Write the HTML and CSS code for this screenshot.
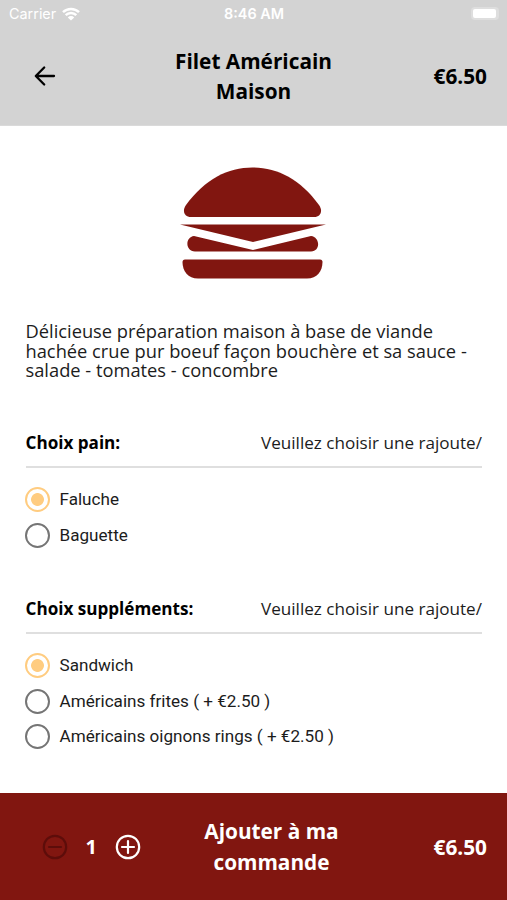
FILE: index.html
```html
<!DOCTYPE html>
<html lang="fr">
   <head>
      <title>Filet Américain Maison</title>
      <meta charset="utf-8">
      <link rel="stylesheet" href="styles.css">
   </head>

   <body>
      <div class="screen">
         <header class="header">
            <div class="status">
               <div class="carrier">
                  <span>Carrier</span>
                  <svg class="wifi" viewBox="0 0 18 14">
                     <path d="M1 5.2a11.5 11.5 0 0 1 16 0M3.7 8.1a7.6 7.6 0 0 1 10.6 0" fill="none" stroke="#fff" stroke-width="2.5"/>
                     <path d="M9 13.5L5.8 10.4a4.6 4.6 0 0 1 6.4 0z" fill="#fff"/>
                  </svg>
               </div>
               <span class="time">8:46 AM</span>
               <div class="battery"><div class="level"></div></div>
            </div>
            <div class="bar">
               <svg class="back" viewBox="0 0 22 22">
                  <path d="M20 11H2M10.2 2.5L1.8 11l8.4 8.5" fill="none" stroke="#000" stroke-width="2.3" stroke-linecap="round" stroke-linejoin="round"/>
               </svg>
               <h1 class="title">Filet Américain<br>Maison</h1>
               <span class="price">€6.50</span>
            </div>
         </header>

         <main class="content">
            <svg class="burger" viewBox="0 0 146 112" fill="#811610">
               <path d="M11 50C4 50 2 43.500 6 38C25 12 48 .5 72.500 .5S120 12 139 38C143 43.500 141 50 134 50z"/>
               <path d="M0 57.500H146L73 75z"/>
               <path d="M14 69L73 83L131 69C140 70 141 84 131 84.500H15C5 84 5 70 14 69z"/>
               <path d="M5 92.500H140Q142.500 92.500 142.500 95C142.500 104 137 111.500 127 111.500H18C8 111.500 2.500 104 2.500 95Q2.500 92.500 5 92.500z"/>
            </svg>
            <p class="description">Délicieuse préparation maison à base de viande<br>hachée crue pur boeuf façon bouchère et sa sauce -<br>salade - tomates - concombre</p>

            <section class="group">
               <div class="group_head">
                  <h2>Choix pain:</h2>
                  <span class="hint">Veuillez choisir une rajoute/</span>
               </div>
               <label class="option"><input type="radio" name="pain" checked><span>Faluche</span></label>
               <label class="option"><input type="radio" name="pain"><span>Baguette</span></label>
            </section>

            <section class="group">
               <div class="group_head">
                  <h2>Choix suppléments:</h2>
                  <span class="hint">Veuillez choisir une rajoute/</span>
               </div>
               <label class="option"><input type="radio" name="supplement" checked><span>Sandwich</span></label>
               <label class="option"><input type="radio" name="supplement"><span>Américains frites ( + €2.50 )</span></label>
               <label class="option"><input type="radio" name="supplement"><span>Américains oignons rings ( + €2.50 )</span></label>
            </section>
         </main>

         <footer class="footer">
            <div class="quantity">
               <svg class="minus" viewBox="0 0 26 26">
                  <circle cx="13" cy="13" r="11.200"/>
                  <path d="M7 13h12"/>
               </svg>
               <span class="count">1</span>
               <svg class="plus" viewBox="0 0 26 26">
                  <circle cx="13" cy="13" r="11.200"/>
                  <path d="M7 13h12M13 7v12"/>
               </svg>
            </div>
            <span class="add">Ajouter à ma<br>commande</span>
            <span class="price">€6.50</span>
         </footer>
      </div>
   </body>
</html>
```
FILE: styles.css
```css
* {box-sizing: border-box;}
body {margin: 0; background-color: #fff; color: #000; font-family: "Open Sans", "Noto Sans", sans-serif;}
.screen {display: flex; flex-direction: column; width: 507px; height: 900px; overflow: hidden;}

.header {height: 125px; border-bottom: 1px solid #dadada; box-sizing: content-box; background-color: #d3d3d3;}
.status {display: grid; grid-template-columns: 1fr auto 1fr; align-items: center; height: 27px; padding: 0 8px 0 9px; color: #fff; font-family: Inter, sans-serif; font-size: 14.400px;}
.carrier {display: flex; align-items: center; gap: 6px;}
.wifi {width: 18px; height: 14px;}
.time {font-weight: 600;}
.battery {justify-self: end; width: 28px; height: 13px; padding: 2px; border-radius: 4px; background-color: #dedede;}
.level {width: 23px; height: 9px; border-radius: 2px; background-color: #fff;}

.bar {display: grid; grid-template-columns: 150px 1fr 150px; align-items: center; height: 98px; padding: 0 20px;}
.back {width: 22px; height: 22px; margin-left: 14px;}
.title, .add {margin: 0; font-size: 20.800px; font-weight: 700; line-height: 30.500px; text-align: center; white-space: nowrap;}
.price {justify-self: end; font-size: 20.800px; font-weight: 700;}

.content {flex: 1; padding: 41px 25px 0 25.500px;}
.burger {display: block; width: 146px; height: 112px; margin: 0 0 0 154.500px;}
.description {margin: 42px 0 0; color: #1c1c1c; font-size: 18.300px; line-height: 19.700px; white-space: nowrap;}

.group {margin-top: 39px;}
.group_head {display: flex; justify-content: space-between; align-items: center; height: 49px; margin-bottom: 14px; border-bottom: 2px solid #dfdfdf;}
.group_head h2 {margin: 0; font-size: 17.100px; font-weight: 700;}
.hint {color: #1c1c1c; font-size: 17.100px;}
.group + .group {margin-top: 32px;}
.option {display: flex; align-items: center; gap: 9.500px; height: 35.500px; color: #1c1c1c; font-family: Roboto, sans-serif; font-size: 17.100px;}
.option input {appearance: none; width: 25px; height: 25px; margin: 0 0 0 -.5px; border: 2.500px solid #757575; border-radius: 50%;}
.option input:checked {border-color: #ffcc80; background: radial-gradient(circle, #ffcc80 6px, transparent 6.800px);}
.option span {margin-top: -1px;}

.footer {display: grid; grid-template-columns: 165px 1fr 130px; align-items: center; height: 107px; padding: 0 20px; background-color: #811610; color: #fff;}
.quantity {display: flex; align-items: center; gap: 18px; margin-left: 21.500px;}
.quantity svg {width: 26px; height: 26px; fill: none; stroke: #fff; stroke-width: 2.200; stroke-linecap: round;}
.quantity .minus {stroke: #5d0d0a;}
.count {font-size: 20px; font-weight: 700;}
.footer .add {margin-left: 1px;}
```
